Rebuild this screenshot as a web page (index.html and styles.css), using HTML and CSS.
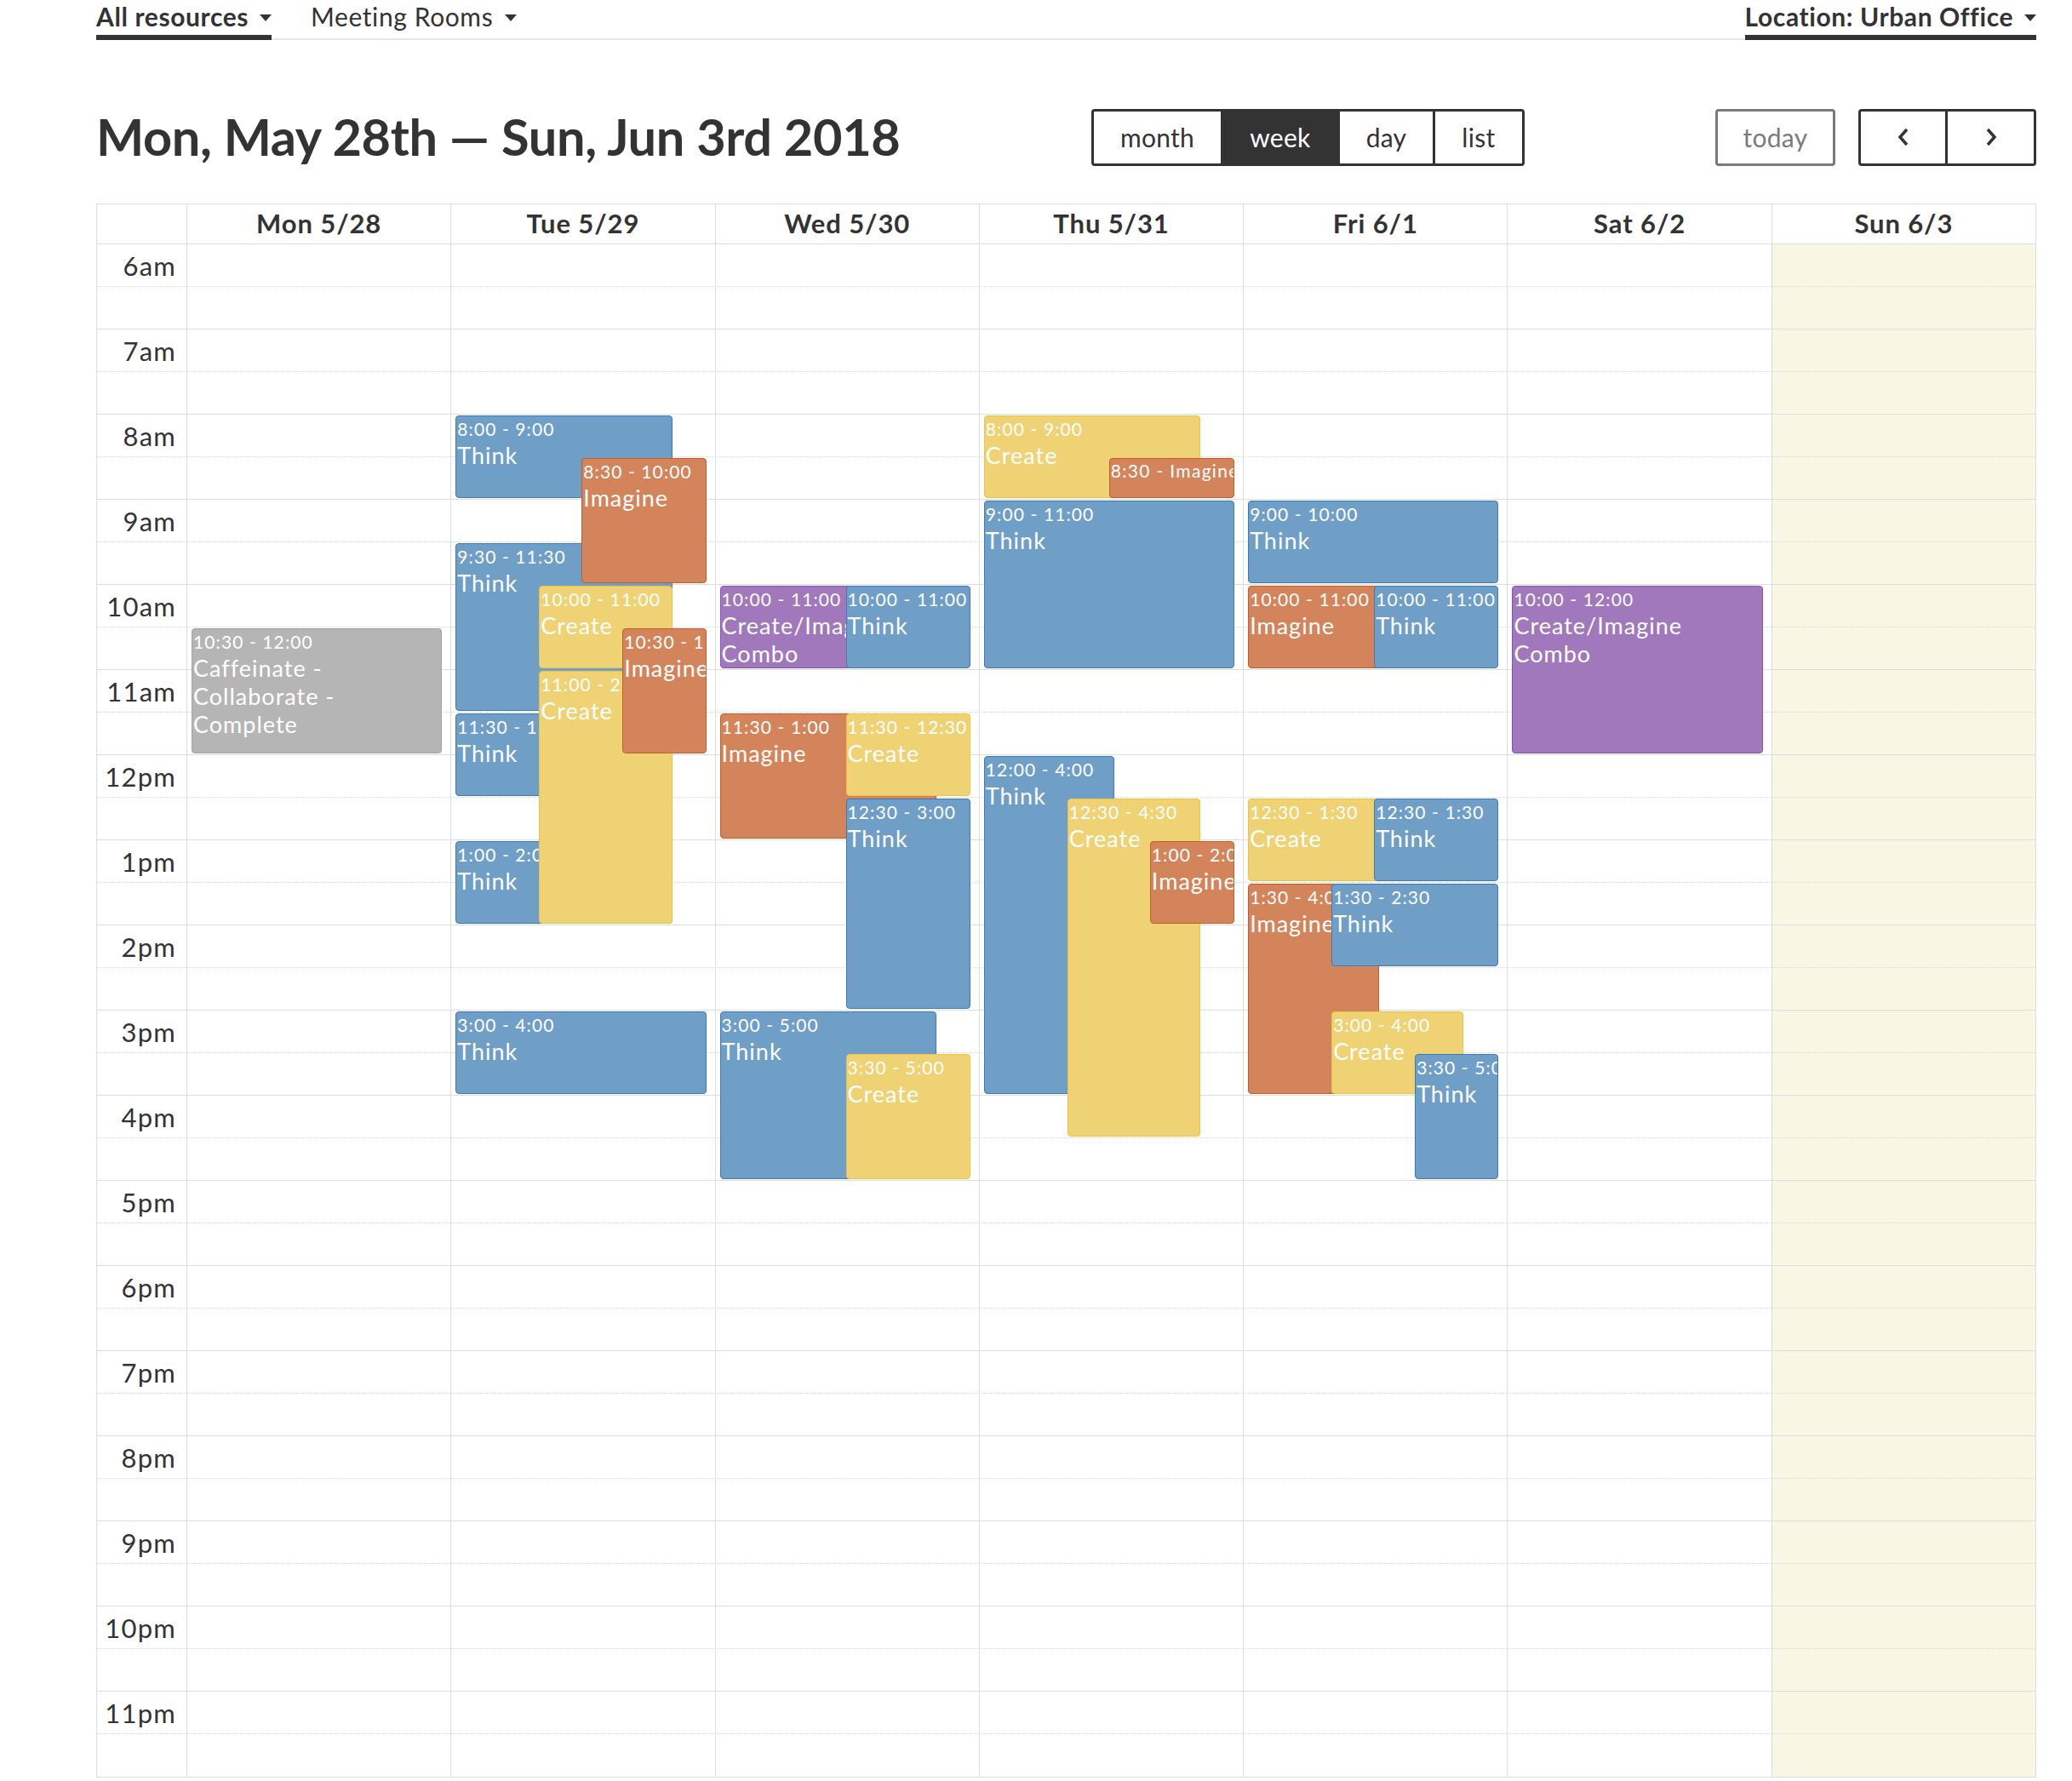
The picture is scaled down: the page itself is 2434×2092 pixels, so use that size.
FILE: index.html
```html
<!DOCTYPE html>
<html>
<head>
<meta charset="utf-8">
<link rel="stylesheet" href="styles.css">
</head>
<body>
<div class="page">
  <nav class="topnav">
    <div class="tabs">
      <div class="tab active">All resources <span class="caret"></span></div>
      <div class="tab">Meeting Rooms <span class="caret"></span></div>
    </div>
    <div class="tab active loc">Location: Urban Office <span class="caret"></span></div>
  </nav>

  <div class="toolbar">
    <h2 class="title">Mon, May 28th — Sun, Jun 3rd 2018</h2>
    <div class="btn-group views">
      <button class="btn">month</button><button class="btn on">week</button><button class="btn">day</button><button class="btn">list</button>
    </div>
    <div class="right">
      <button class="btn today">today</button>
      <div class="btn-group">
        <button class="btn arrow"><svg width="16" height="24" viewBox="0 0 16 24"><polyline points="12,3 4,12 12,21" fill="none" stroke="#333" stroke-width="3.5"/></svg></button><button class="btn arrow"><svg width="16" height="24" viewBox="0 0 16 24"><polyline points="4,3 12,12 4,21" fill="none" stroke="#333" stroke-width="3.5"/></svg></button>
      </div>
    </div>
  </div>

  <div class="cal">
    <div class="head">
      <div class="axis"></div>
      <div class="day">Mon 5/28</div>
      <div class="day">Tue 5/29</div>
      <div class="day">Wed 5/30</div>
      <div class="day">Thu 5/31</div>
      <div class="day">Fri 6/1</div>
      <div class="day">Sat 6/2</div>
      <div class="day">Sun 6/3</div>
    </div>
    <div class="body">
      <div class="bgcols">
        <div class="bgcol"></div><div class="bgcol"></div><div class="bgcol"></div><div class="bgcol"></div><div class="bgcol"></div><div class="bgcol"></div><div class="bgcol today-col"></div>
      </div>
      <div class="slats">
        <div class="slat"><span class="lbl">6am</span></div><div class="slat half"></div>
        <div class="slat"><span class="lbl">7am</span></div><div class="slat half"></div>
        <div class="slat"><span class="lbl">8am</span></div><div class="slat half"></div>
        <div class="slat"><span class="lbl">9am</span></div><div class="slat half"></div>
        <div class="slat"><span class="lbl">10am</span></div><div class="slat half"></div>
        <div class="slat"><span class="lbl">11am</span></div><div class="slat half"></div>
        <div class="slat"><span class="lbl">12pm</span></div><div class="slat half"></div>
        <div class="slat"><span class="lbl">1pm</span></div><div class="slat half"></div>
        <div class="slat"><span class="lbl">2pm</span></div><div class="slat half"></div>
        <div class="slat"><span class="lbl">3pm</span></div><div class="slat half"></div>
        <div class="slat"><span class="lbl">4pm</span></div><div class="slat half"></div>
        <div class="slat"><span class="lbl">5pm</span></div><div class="slat half"></div>
        <div class="slat"><span class="lbl">6pm</span></div><div class="slat half"></div>
        <div class="slat"><span class="lbl">7pm</span></div><div class="slat half"></div>
        <div class="slat"><span class="lbl">8pm</span></div><div class="slat half"></div>
        <div class="slat"><span class="lbl">9pm</span></div><div class="slat half"></div>
        <div class="slat"><span class="lbl">10pm</span></div><div class="slat half"></div>
        <div class="slat"><span class="lbl">11pm</span></div><div class="slat half"></div>
      </div>
      <div class="evcols">
        <div class="evcol">
          <div class="ev gray" style="top:451px;height:147px;left:0;right:0"><div class="t">10:30 - 12:00</div><div class="n">Caffeinate - Collaborate - Complete</div></div>
        </div>
        <div class="evcol">
          <div class="ev think" style="top:201px;height:97px;left:0;right:40px"><div class="t">8:00 - 9:00</div><div class="n">Think</div></div>
          <div class="ev think" style="top:351px;height:197px;left:0;right:40px"><div class="t">9:30 - 11:30</div><div class="n">Think</div></div>
          <div class="ev think" style="top:551px;height:97px;left:0;right:40px"><div class="t">11:30 - 12:30</div><div class="n">Think</div></div>
          <div class="ev think" style="top:701px;height:97px;left:0;right:40px"><div class="t">1:00 - 2:00</div><div class="n">Think</div></div>
          <div class="ev think" style="top:901px;height:97px;left:0;right:0"><div class="t">3:00 - 4:00</div><div class="n">Think</div></div>
          <div class="ev create" style="top:401px;height:97px;left:98px;right:40px"><div class="t">10:00 - 11:00</div><div class="n">Create</div></div>
          <div class="ev create" style="top:501px;height:297px;left:98px;right:40px"><div class="t">11:00 - 2:00</div><div class="n">Create</div></div>
          <div class="ev imagine" style="top:251px;height:147px;left:148px;right:0"><div class="t">8:30 - 10:00</div><div class="n">Imagine</div></div>
          <div class="ev imagine" style="top:451px;height:147px;left:196px;right:0"><div class="t">10:30 - 12:00</div><div class="n">Imagine</div></div>
        </div>
        <div class="evcol">
          <div class="ev combo" style="top:401px;height:97px;left:0;right:40px"><div class="t">10:00 - 11:00</div><div class="n">Create/Imagine Combo</div></div>
          <div class="ev imagine" style="top:551px;height:147px;left:0;right:40px"><div class="t">11:30 - 1:00</div><div class="n">Imagine</div></div>
          <div class="ev think" style="top:901px;height:197px;left:0;right:40px"><div class="t">3:00 - 5:00</div><div class="n">Think</div></div>
          <div class="ev think" style="top:401px;height:97px;left:148px;right:0"><div class="t">10:00 - 11:00</div><div class="n">Think</div></div>
          <div class="ev create" style="top:551px;height:97px;left:148px;right:0"><div class="t">11:30 - 12:30</div><div class="n">Create</div></div>
          <div class="ev think" style="top:651px;height:247px;left:148px;right:0"><div class="t">12:30 - 3:00</div><div class="n">Think</div></div>
          <div class="ev create" style="top:951px;height:147px;left:148px;right:0"><div class="t">3:30 - 5:00</div><div class="n">Create</div></div>
        </div>
        <div class="evcol">
          <div class="ev create" style="top:201px;height:97px;left:0;right:40px"><div class="t">8:00 - 9:00</div><div class="n">Create</div></div>
          <div class="ev think" style="top:301px;height:197px;left:0;right:0"><div class="t">9:00 - 11:00</div><div class="n">Think</div></div>
          <div class="ev think" style="top:601px;height:397px;left:0;right:141px"><div class="t">12:00 - 4:00</div><div class="n">Think</div></div>
          <div class="ev imagine short" style="top:251px;height:47px;left:147px;right:0"><span class="t">8:30 - </span><span class="n">Imagine</span></div>
          <div class="ev create" style="top:651px;height:397px;left:98px;right:40px"><div class="t">12:30 - 4:30</div><div class="n">Create</div></div>
          <div class="ev imagine" style="top:701px;height:97px;left:195px;right:0"><div class="t">1:00 - 2:00</div><div class="n">Imagine</div></div>
        </div>
        <div class="evcol">
          <div class="ev think" style="top:301px;height:97px;left:0;right:0"><div class="t">9:00 - 10:00</div><div class="n">Think</div></div>
          <div class="ev imagine" style="top:401px;height:97px;left:0;right:40px"><div class="t">10:00 - 11:00</div><div class="n">Imagine</div></div>
          <div class="ev create" style="top:651px;height:97px;left:0;right:40px"><div class="t">12:30 - 1:30</div><div class="n">Create</div></div>
          <div class="ev imagine" style="top:751px;height:247px;left:0;right:140px"><div class="t">1:30 - 4:00</div><div class="n">Imagine</div></div>
          <div class="ev think" style="top:401px;height:97px;left:148px;right:0"><div class="t">10:00 - 11:00</div><div class="n">Think</div></div>
          <div class="ev think" style="top:651px;height:97px;left:148px;right:0"><div class="t">12:30 - 1:30</div><div class="n">Think</div></div>
          <div class="ev think" style="top:751px;height:97px;left:98px;right:0"><div class="t">1:30 - 2:30</div><div class="n">Think</div></div>
          <div class="ev create" style="top:901px;height:97px;left:98px;right:41px"><div class="t">3:00 - 4:00</div><div class="n">Create</div></div>
          <div class="ev think" style="top:951px;height:147px;left:196px;right:0"><div class="t">3:30 - 5:00</div><div class="n">Think</div></div>
        </div>
        <div class="evcol">
          <div class="ev combo" style="top:401px;height:197px;left:0;right:0"><div class="t">10:00 - 12:00</div><div class="n">Create/Imagine Combo</div></div>
        </div>
        <div class="evcol"></div>
      </div>
    </div>
  </div>
</div>
</body>
</html>
```
FILE: styles.css
```css
* { box-sizing: border-box; }
html, body { margin: 0; padding: 0; background: #fff; }
body { font-family: Lato, "Open Sans", sans-serif; color: #333; }

.page { margin-left: 113px; width: 2279px; }

/* top nav */
.topnav {
  display: flex;
  justify-content: space-between;
  align-items: flex-end;
  height: 47px;
  border-bottom: 2px solid #e6e6e6;
}
.tabs { display: flex; gap: 46px; }
.tab {
  font-size: 30px;
  line-height: 38px;
  letter-spacing: 0.6px;
  font-weight: 400;
  color: #333;
  padding-bottom: 3px;
  margin-bottom: -2px;
  border-bottom: 6px solid transparent;
  white-space: nowrap;
}
.tab.active { font-weight: 700; border-bottom-color: #333; }
.caret {
  display: inline-block;
  width: 0; height: 0;
  border-left: 7px solid transparent;
  border-right: 7px solid transparent;
  border-top: 8px solid #333;
  vertical-align: middle;
  margin-left: 5px;
  position: relative; top: -2px;
}

/* toolbar */
.toolbar {
  display: grid;
  grid-template-columns: auto 1fr auto;
  align-items: center;
  margin-top: 78px;
  height: 67px;
  margin-bottom: 47px;
}
.title {
  margin: 0;
  font-size: 59.5px;
  font-weight: 700;
  letter-spacing: -0.35px;
  color: #333;
  white-space: nowrap;
  position: relative;
  top: -1px;
}
.views { justify-self: center; }
.right { display: flex; gap: 27px; align-items: center; }
.btn-group { display: flex; }
.btn {
  font-family: Lato, sans-serif;
  font-size: 30px;
  letter-spacing: 0.3px;
  height: 67px;
  padding: 0 31px;
  background: #fff;
  color: #333;
  border: 3px solid #333;
  border-left-width: 0;
  margin: 0;
  cursor: pointer;
}
.btn-group .btn:first-child { border-left-width: 3px; border-radius: 4px 0 0 4px; }
.btn-group .btn:last-child { border-radius: 0 4px 4px 0; }
.btn.on { background: #333; color: #fff; }
.btn.today { border: 3px solid #7a7a7a; color: #7a7a7a; border-radius: 4px; width: 141px; padding: 0; }
.btn.arrow { width: 105px; padding: 0; display: flex; align-items: center; justify-content: center; }
.btn.arrow:first-child { width: 105px; }
.btn.arrow:last-child { width: 104px; }

/* calendar */
.cal { border: 1px solid #ddd; }
.head {
  display: grid;
  grid-template-columns: 105px repeat(7, 1fr);
  height: 47px;
  border-bottom: 1px solid #ddd;
}
.head .day {
  border-left: 1px solid #ddd;
  text-align: center;
  font-weight: 700;
  font-size: 31px;
  line-height: 44px;
  letter-spacing: 0.9px;
  color: #333;
}
.body { position: relative; }
.bgcols {
  position: absolute;
  top: 0; bottom: 0; left: 105px; right: 0;
  display: grid;
  grid-template-columns: repeat(7, 1fr);
}
.bgcol { border-left: 1px solid #ddd; }
.bgcol.today-col { background: #f9f7e4; }
.slats { position: relative; }
.slat {
  height: 50px;
  border-bottom: 1px dotted #d9d9d9;
  display: flex;
  align-items: center;
}
.slat.half { border-bottom: 1px solid #ddd; }
.slats .slat:last-child { border-bottom: 0; }
.lbl {
  width: 105px;
  text-align: right;
  padding-right: 12px;
  font-size: 31px;
  letter-spacing: 1.2px;
  color: #333;
}
.evcols {
  position: absolute;
  top: 0; bottom: 0; left: 105px; right: 0;
  display: grid;
  grid-template-columns: repeat(7, 1fr);
}
.evcol { position: relative; margin: 0 10px 0 6px; }

.ev {
  position: absolute;
  border: 1.5px solid;
  border-radius: 4px;
  color: #fff;
  overflow: hidden;
  padding: 1px 1px 0 1px;
}
.ev .t {
  font-size: 21px;
  line-height: 28px;
  letter-spacing: 1.1px;
  white-space: nowrap;
}
.ev .n {
  font-size: 27px;
  line-height: 33px;
  letter-spacing: 1px;
}
.ev.short { white-space: nowrap; line-height: 26px; }
.ev.short .t, .ev.short .n { font-size: 21px; line-height: 26px; letter-spacing: 1.3px; }

.think { background: #6f9ec7; border-color: #3e7ab6; }
.imagine { background: #d3845b; border-color: #c45d27; }
.create { background: #eed273; border-color: #eac444; }
.combo { background: #a078bb; border-color: #8753af; }
.gray { background: #b5b5b5; border-color: #a3a3a3; }
```
